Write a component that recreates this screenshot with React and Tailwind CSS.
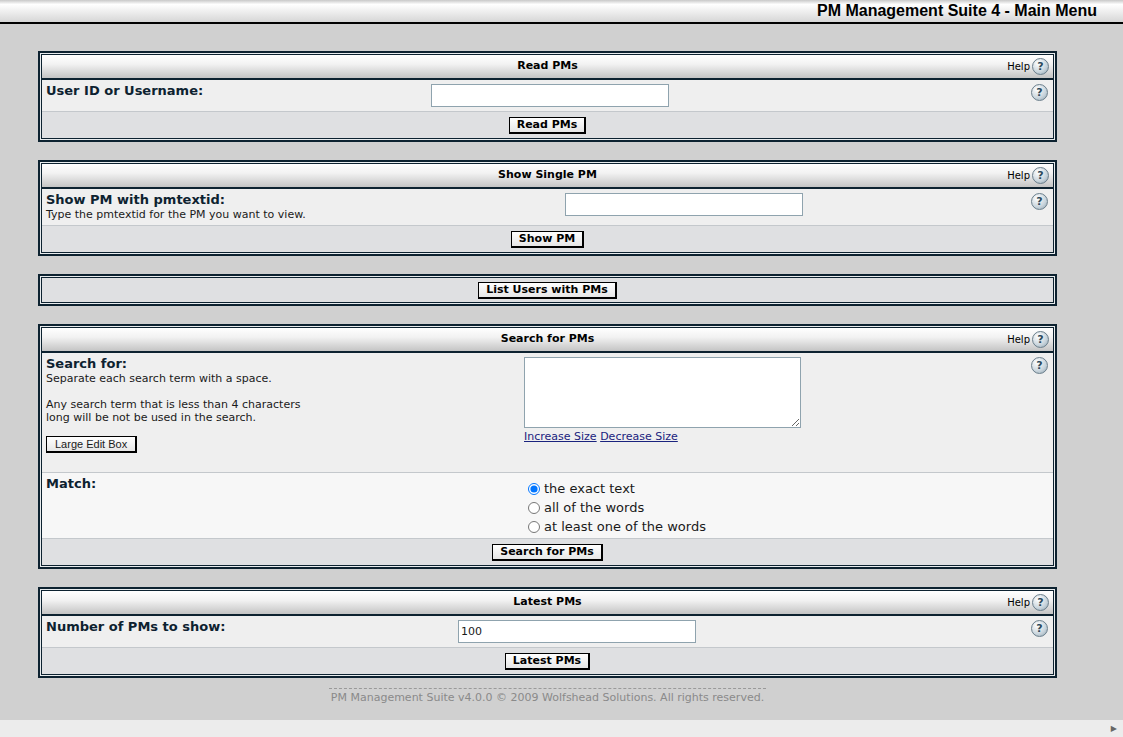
import React from "react";

const font = { fontFamily: '"DejaVu Sans", Verdana, sans-serif' };

function QIcon() {
  return (
    <span className="inline-flex h-[17px] w-[17px] items-center justify-center rounded-full border border-[#6b7f8c] bg-[radial-gradient(circle_at_35%_30%,#ffffff,#c8d4dc_60%,#8ea2ae)] text-[11px] font-bold leading-none text-[#2d4a5c]">
      ?
    </span>
  );
}

function Btn({ children }) {
  return (
    <button className="border border-black border-b-2 border-r-2 bg-[linear-gradient(#ffffff,#e6e6e6)] px-[7px] py-0 text-[11px] font-bold leading-[14px] text-black">
      {children}
    </button>
  );
}

function Box({ title, children, footer }) {
  return (
    <div className="border-[2px] border-[#0d2230] bg-[#e8ecee] p-px">
      <div className="border border-[#0d2230]">
        {title && (
          <div className="relative flex h-[25px] items-center justify-center border-b-2 border-[#0d2230] bg-[linear-gradient(#ffffff,#f2f2f2_40%,#c4c4c4)] text-[11px] font-bold text-black">
            {title}
            <span className="absolute right-[4px] top-[3px] flex items-center gap-[2px] text-[10px] font-normal">
              Help <QIcon />
            </span>
          </div>
        )}
        {children}
        <div className="flex h-[26px] items-center justify-center bg-[#dfe0e2]">{footer}</div>
      </div>
    </div>
  );
}

function Row({ labelW, children, label, sub, h, bg = "bg-[#efefef]", help = true }) {
  return (
    <div className={`flex overflow-hidden ${bg} border-b border-[#c4c8cc]`} style={{ height: h }}>
      <div className="shrink-0 px-[4px] pt-[3px]" style={{ width: labelW }}>
        <div className="text-[13px] font-bold leading-[16px] text-[#0d2230]">{label}</div>
        {sub}
      </div>
      <div className="flex-1 pt-[4px]">{children}</div>
      <div className="w-[22px] pt-[4px]">{help && <QIcon />}</div>
    </div>
  );
}

const Input = ({ w, value = "" }) => (
  <input
    defaultValue={value}
    className="h-[23px] border border-[#8fa3ae] bg-white px-[2px] text-[11px] outline-none"
    style={{ width: w }}
  />
);

export default function App() {
  return (
    <div style={font} className="flex min-h-[737px] flex-col bg-[#d0d0d0] text-[11px] text-[#1a1a1a]">
      <div className="flex h-[24px] items-center justify-end border-b-2 border-black bg-[linear-gradient(#c8c8c8,#ffffff_20%,#d6d6d6)] pr-[26px] text-[16px] font-bold text-black" style={{ fontFamily: '"Liberation Sans Narrow", "Liberation Sans", sans-serif' }}>
        PM Management Suite 4 - Main Menu
      </div>

      <div className="ml-[38px] mr-[66px] mt-[27px] flex flex-col gap-[18px]">
        <Box title="Read PMs" footer={<Btn>Read PMs</Btn>}>
          <Row labelW={389} label="User ID or Username:" h={32}>
            <Input w={238} />
          </Row>
        </Box>

        <Box title="Show Single PM" footer={<Btn>Show PM</Btn>}>
          <Row labelW={523} label="Show PM with pmtextid:" h={37}
            sub={<div className="text-[11px] leading-[13px]">Type the pmtextid for the PM you want to view.</div>}>
            <Input w={238} />
          </Row>
        </Box>

        <div className="border-[2px] border-[#0d2230] bg-[#e8ecee] p-px">
          <div className="flex h-[26px] items-center justify-center border border-[#0d2230] bg-[#dfe0e2]">
            <Btn>List Users with PMs</Btn>
          </div>
        </div>

        <Box title="Search for PMs" footer={<Btn>Search for PMs</Btn>}>
          <Row labelW={482} label="Search for:" h={120}
            sub={
              <div className="text-[11px] leading-[13px]">
                <div>Separate each search term with a space.</div>
                <div className="mt-[13px] w-[280px]">Any search term that is less than 4 characters long will be not be used in the search.</div>
                <div className="mt-[12px]"><button className="border border-black border-b-2 border-r-2 bg-[linear-gradient(#ffffff,#e6e6e6)] px-[8px] py-0 text-[11px] leading-[14px]" style={{ fontFamily: '"Liberation Sans", Tahoma, sans-serif' }}>Large Edit Box</button></div>
              </div>
            }>
            <textarea className="block h-[71px] w-[277px] resize border border-[#8fa3ae] bg-white" />
            <div className="mt-[1px] text-[11px] text-[#1a237e]">
              <span className="underline">Increase Size</span> <span className="underline">Decrease Size</span>
            </div>
          </Row>
          <Row labelW={486} label="Match:" h={66} bg="bg-[#f7f7f7]" help={false}>
            <div className="flex flex-col gap-[4px] pt-[4px] text-[13px] leading-[15px]">
              {["the exact text", "all of the words", "at least one of the words"].map((t, i) => (
                <label key={t} className="flex items-center gap-[4px]">
                  <input type="radio" name="m" defaultChecked={i === 0} className="h-[12px] w-[12px]" />
                  {t}
                </label>
              ))}
            </div>
          </Row>
        </Box>

        <Box title="Latest PMs" footer={<Btn>Latest PMs</Btn>}>
          <Row labelW={416} label="Number of PMs to show:" h={32}>
            <Input w={238} value="100" />
          </Row>
        </Box>

        <div className="-mt-[8px] self-center border-t border-dashed border-[#999] px-[2px] pt-[1px] text-[11px] text-[#8a8a8a]">
          PM Management Suite v4.0.0 © 2009 Wolfshead Solutions. All rights reserved.
        </div>
      </div>
      <div className="flex-1" />
      <div className="flex h-[17px] items-center justify-end bg-[#ececec] pr-[6px] text-[8px] text-[#666]">▶</div>
    </div>
  );
}
